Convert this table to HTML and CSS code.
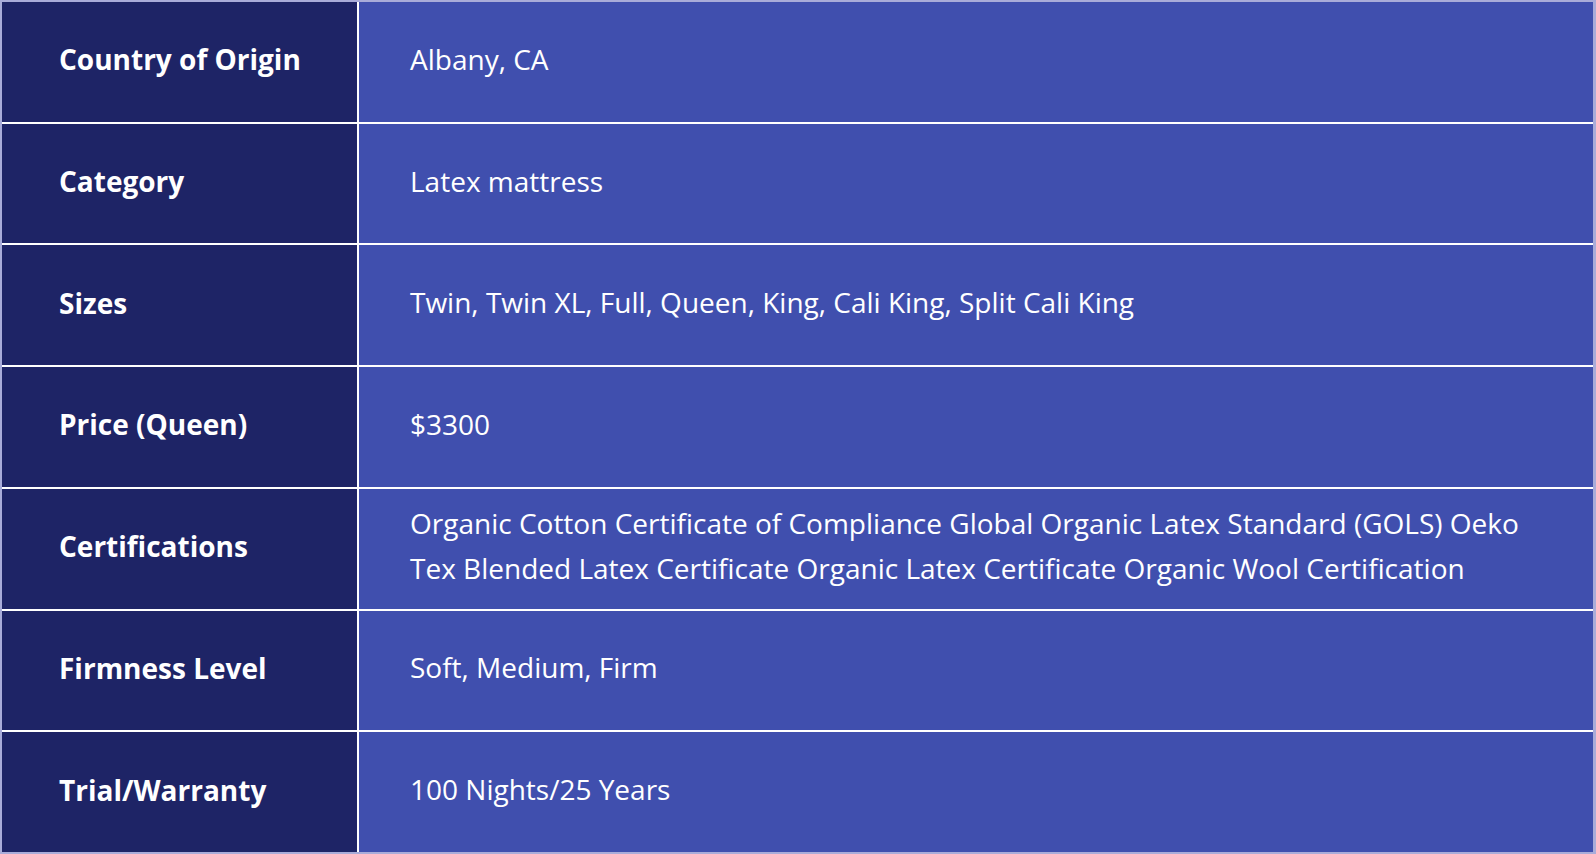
FILE: index.html
```html
<!DOCTYPE html>
<html lang="en">
<head>
    <meta charset="UTF-8">
    <meta name="viewport" content="width=device-width, initial-scale=1.0">
    <title>Mattress Specs</title>
    <link rel="stylesheet" href="styles.css">
</head>
<body>
    <div class="specs">
        <div class="label">Country of Origin</div>
        <div class="value">Albany, CA</div>

        <div class="label">Category</div>
        <div class="value">Latex mattress</div>

        <div class="label">Sizes</div>
        <div class="value">Twin, Twin XL, Full, Queen, King, Cali King, Split Cali King</div>

        <div class="label">Price (Queen)</div>
        <div class="value">$3300</div>

        <div class="label">Certifications</div>
        <div class="value">Organic Cotton Certificate of Compliance Global Organic Latex Standard (GOLS) Oeko Tex Blended Latex Certificate Organic Latex Certificate Organic Wool Certification</div>

        <div class="label">Firmness Level</div>
        <div class="value">Soft, Medium, Firm</div>

        <div class="label">Trial/Warranty</div>
        <div class="value">100 Nights/25 Years</div>
    </div>
</body>
</html>
```

FILE: styles.css
```css
body{
    margin: 0;
    height: 100vh;
    overflow: hidden;
    font-family: "Open Sans", "Noto Sans", sans-serif;
    color: #fff;
}
.specs{
    box-sizing: border-box;
    height: 100vh;
    display: grid;
    grid-template-columns: 355px 1fr;
    grid-template-rows: repeat(7, 1fr);
    gap: 2px;
    background: #fff;
    border: 2px solid #a9acd9;
    border-right-width: 3px;
}
.label{
    display: flex;
    align-items: center;
    padding: 0 0 5px 57px;
    background: #1e2466;
    font-weight: 700;
    font-size: 28px;
}
.value{
    display: flex;
    align-items: center;
    padding: 0 60px 5px 51px;
    background: #404fae;
    font-size: 28px;
    line-height: 45px;
}
```
